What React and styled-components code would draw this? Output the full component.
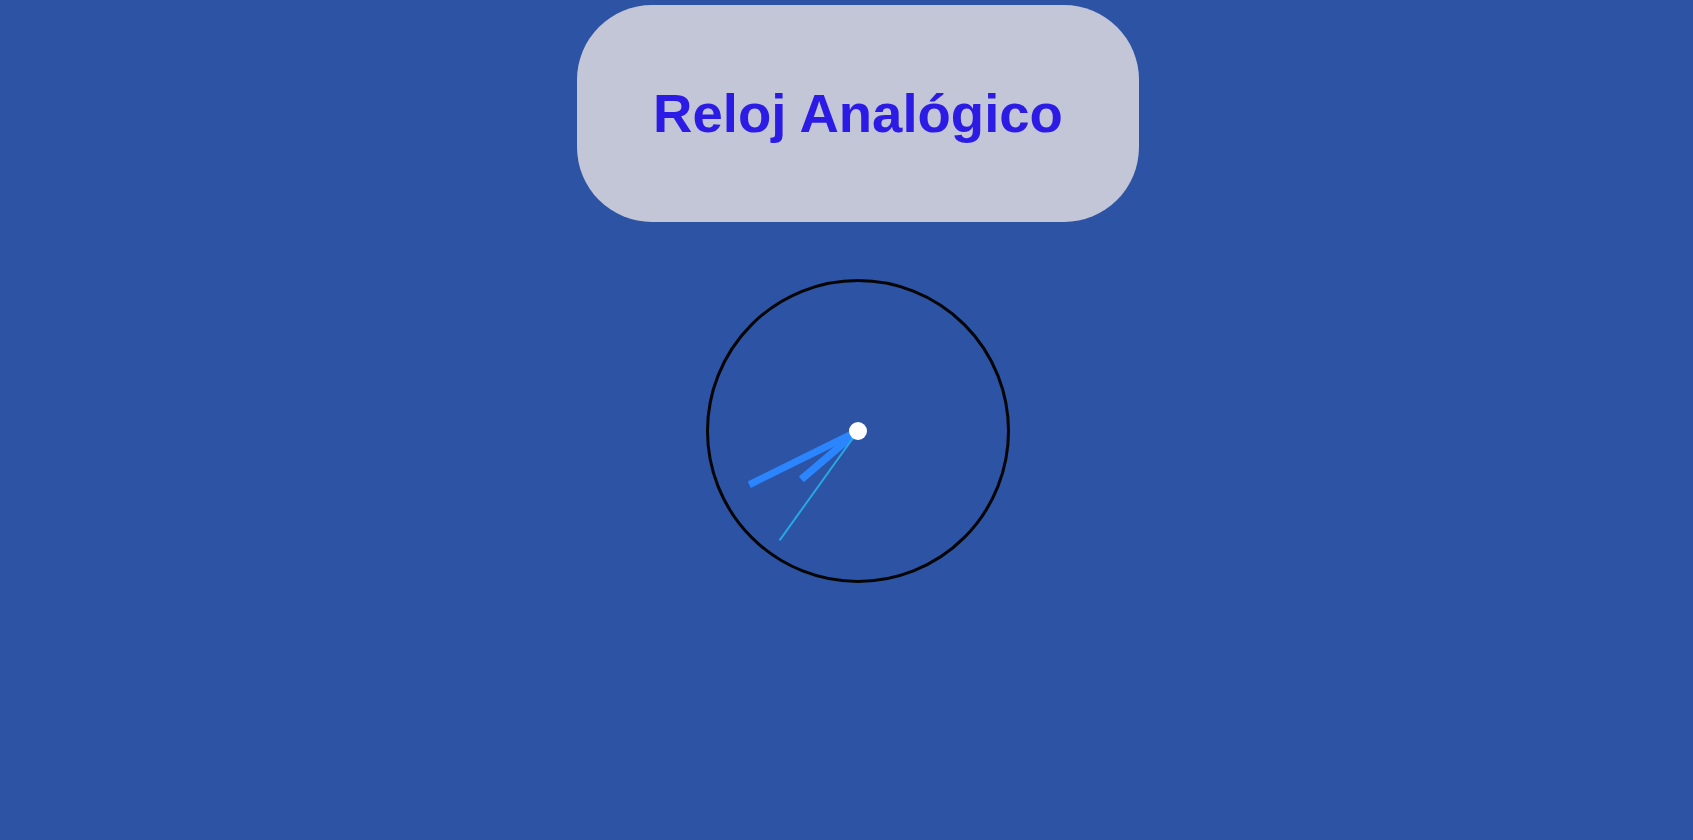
import React from "react";
import styled, { createGlobalStyle } from "styled-components";

const GlobalStyle = createGlobalStyle`
  html, body {
    margin: 0;
    padding: 0;
    background: #2c53a4;
  }
  #root {
    min-height: 100vh;
  }
`;

const Page = styled.main`
  min-height: 100vh;
  box-sizing: border-box;
  display: flex;
  flex-direction: column;
  align-items: center;
  padding: 5px 0 0 23px;
  background: #2c53a4;
`;

const TitleCard = styled.header`
  width: 562px;
  height: 217px;
  box-sizing: border-box;
  padding-top: 2px;
  border-radius: 75px;
  background: #c3c6d7;
  display: flex;
  align-items: center;
  justify-content: center;
`;

const Title = styled.h1`
  margin: 0;
  font-family: "Liberation Sans", Arial, sans-serif;
  font-weight: 700;
  font-size: 54.5px;
  line-height: 1;
  color: #2b1be4;
  letter-spacing: 0;
`;

const ClockFace = styled.div`
  margin-top: 57px;
  width: 298px;
  height: 298px;
  border: 3px solid #050505;
  border-radius: 50%;
  display: flex;
`;

const Hands = styled.svg`
  width: 298px;
  height: 298px;
  display: block;
`;

const C = 149;

function hand(angleDeg, length) {
  const a = (angleDeg * Math.PI) / 180;
  return { x2: C + Math.sin(a) * length, y2: C - Math.cos(a) * length };
}

export default function App() {
  const hour = hand(229.6, 74.5);
  const minute = hand(243.7, 121.3);
  const second = hand(215.65, 134.5);
  return (
    <>
      <GlobalStyle />
      <Page>
        <TitleCard>
          <Title>Reloj Analógico</Title>
        </TitleCard>
        <ClockFace>
          <Hands viewBox="0 0 298 298">
            <line x1={C} y1={C} {...minute} stroke="#2a85ff" strokeWidth="7" />
            <line x1={C} y1={C} {...hour} stroke="#2a85ff" strokeWidth="7.5" />
            <line x1={C} y1={C} {...second} stroke="#27a8e6" strokeWidth="2" />
            <circle cx={C} cy={C} r="9" fill="#ffffff" />
          </Hands>
        </ClockFace>
      </Page>
    </>
  );
}
